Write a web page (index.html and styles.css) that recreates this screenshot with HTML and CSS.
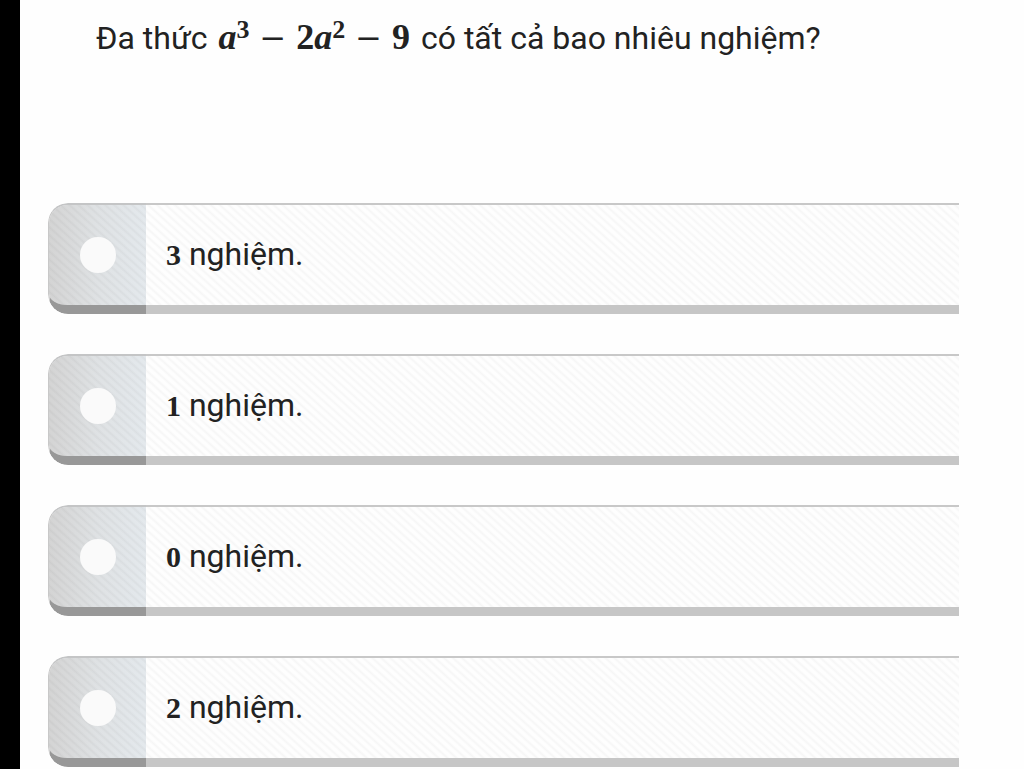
FILE: index.html
```html
<!DOCTYPE html>
<html lang="vi">
<head>
    <meta charset="UTF-8">
    <meta name="viewport" content="width=device-width, initial-scale=1.0">
    <title>Đa thức</title>
    <link rel="stylesheet" href="styles.css">
</head>
<body>
    <form class="quiz">
        <p class="question" id="question">Đa thức <span class="math"><i>a</i><sup>3</sup><span class="op">−</span>2<i>a</i><sup>2</sup><span class="op">−</span>9</span> có tất cả bao nhiêu nghiệm?</p>

        <div class="options" role="radiogroup" aria-labelledby="question">
            <label class="option">
                <span class="marker"><input type="radio" name="answer" value="3"></span>
                <span class="answer"><span class="num">3</span> nghiệm.</span>
            </label>
            <label class="option">
                <span class="marker"><input type="radio" name="answer" value="1"></span>
                <span class="answer"><span class="num">1</span> nghiệm.</span>
            </label>
            <label class="option">
                <span class="marker"><input type="radio" name="answer" value="0"></span>
                <span class="answer"><span class="num">0</span> nghiệm.</span>
            </label>
            <label class="option">
                <span class="marker"><input type="radio" name="answer" value="2"></span>
                <span class="answer"><span class="num">2</span> nghiệm.</span>
            </label>
        </div>
    </form>
</body>
</html>
```
FILE: styles.css
```css
* {
    box-sizing: border-box;
    margin: 0;
    padding: 0;
}

body {
    min-height: 100vh;
    border-left: 20px solid #000;
    background-color: #fefefe;
    color: #222;
    font-family: Roboto, sans-serif;
    font-size: 32px;
    line-height: 40px;
}

.quiz {
    padding: 18px 65px 0 28px;
}

.question {
    min-height: 185px;
    padding-left: 48px;
}

.math,
.num {
    font-family: "Liberation Serif", serif;
    font-weight: bold;
}

.math {
    margin: 0 3px;
    font-size: 36px;
    line-height: 1;
}

.math sup {
    font-size: 26px;
    line-height: 0;
    vertical-align: 11px;
}

.op {
    margin: 0 10px;
    font-family: "DejaVu Sans", sans-serif;
    font-size: 32px;
    font-weight: normal;
    line-height: 0;
}

.num {
    font-size: 30px;
    line-height: 1;
}

.options {
    display: flex;
    flex-direction: column;
    gap: 40px;
}

.option {
    display: flex;
    height: 111px;
    border-radius: 20px 0 0 20px;
    overflow: hidden;
    cursor: pointer;
    /* diagonal hatching across the whole row */
    background-image: repeating-linear-gradient(42deg, #fefefe 0, #fefefe 2px, #f6f6f6 4px, #fefefe 6px);
}

.marker {
    display: flex;
    align-items: center;
    justify-content: center;
    width: 98px;
    border-top: 2px solid #c4c5c6;
    border-left: 1px solid #c8c8c8;
    border-bottom: 9px solid #989898;
    border-radius: 20px 0 0 20px;
    background-image:
        repeating-linear-gradient(42deg, transparent 0, transparent 2px, rgba(90, 90, 90, 0.06) 4px, transparent 6px),
        linear-gradient(to right, #d4d4d4, #dfe2e4 50%, #e4e9ed);
    background-clip: padding-box;
}

.marker input {
    appearance: none;
    width: 36px;
    height: 36px;
    border-radius: 50%;
    background-color: #fafafa;
    cursor: pointer;
}

.marker input:checked {
    border: 9px solid #fafafa;
    background-color: #777;
}

.answer {
    flex: 1;
    padding: 29px 20px 0;
    border-top: 2px solid #c8c8c8;
    border-bottom: 9px solid #c6c6c6;
}
```
